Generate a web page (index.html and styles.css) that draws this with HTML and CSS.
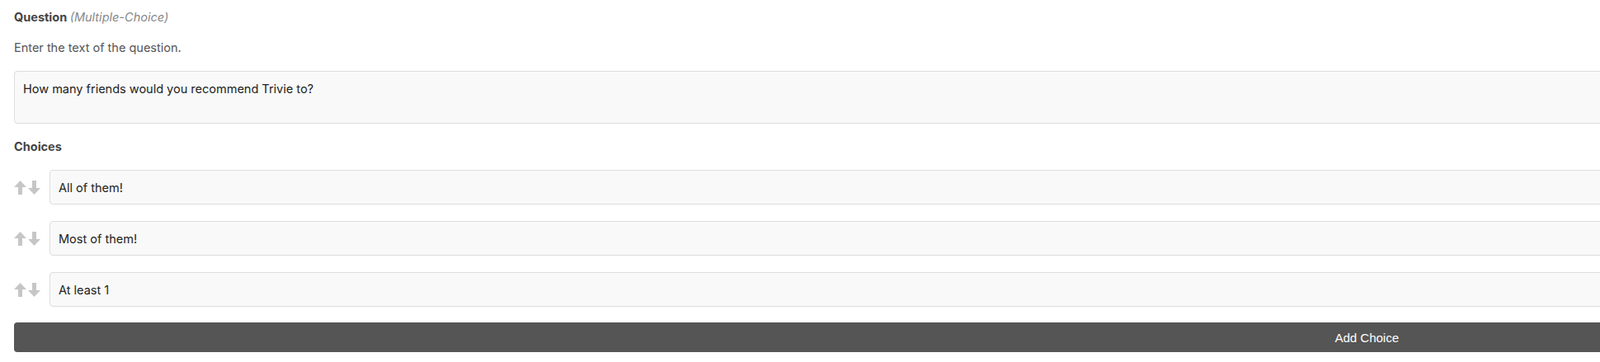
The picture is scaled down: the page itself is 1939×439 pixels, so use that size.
FILE: index.html
```html
<!DOCTYPE html>
<html lang="en">
<head>
  <meta charset="UTF-8" />
  <title>Question Editor</title>
  <link rel="stylesheet" href="styles.css">
</head>
<body>

  <div class="editor">
    <!-- Pregunta -->
    <div class="field-label">Question <em>(Multiple-Choice)</em></div>
    <p class="hint">Enter the text of the question.</p>
    <textarea class="question-text" rows="2">How many friends would you recommend Trivie to?</textarea>

    <!-- Opciones -->
    <div class="field-label choices-label">Choices</div>
    <div class="choices">
      <div class="choice-row">
        <span class="sort">
          <svg viewBox="0 0 15 17"><path d="M7.5 0 15 8H10V17H5V8H0Z"/></svg>
          <svg viewBox="0 0 15 17"><path d="M7.5 17 15 9H10V0H5V9H0Z"/></svg>
        </span>
        <input type="text" class="choice-input" value="All of them!" />
      </div>
      <div class="choice-row">
        <span class="sort">
          <svg viewBox="0 0 15 17"><path d="M7.5 0 15 8H10V17H5V8H0Z"/></svg>
          <svg viewBox="0 0 15 17"><path d="M7.5 17 15 9H10V0H5V9H0Z"/></svg>
        </span>
        <input type="text" class="choice-input" value="Most of them!" />
      </div>
      <div class="choice-row">
        <span class="sort">
          <svg viewBox="0 0 15 17"><path d="M7.5 0 15 8H10V17H5V8H0Z"/></svg>
          <svg viewBox="0 0 15 17"><path d="M7.5 17 15 9H10V0H5V9H0Z"/></svg>
        </span>
        <input type="text" class="choice-input" value="At least 1" />
      </div>
    </div>

    <button type="button" class="add-choice">Add Choice</button>
  </div>

</body>
</html>
```

FILE: styles.css
```css
html, body {
  overflow: hidden;
}
body {
  font-family: 'Inter', 'Liberation Sans', sans-serif;
  background-color: #fff;
  color: #444;
  margin: 0;
  padding: 0;
}
.editor {
  width: 3279px;
  padding: 12px 17px 0;
}
.field-label {
  font-size: 14.5px;
  font-weight: 700;
  line-height: 18px;
  color: #444;
}
.field-label em {
  font-weight: 400;
  color: #888;
}
.hint {
  font-size: 14.5px;
  line-height: 18px;
  color: #555;
  margin: 19px 0;
}
.question-text {
  display: block;
  box-sizing: border-box;
  width: 100%;
  height: 64px;
  padding: 12px 10px 0;
  font-family: 'Inter', 'Liberation Sans', sans-serif;
  font-size: 14.5px;
  line-height: 18px;
  color: #222;
  background-color: #f9f9f9;
  border: 1px solid #ddd;
  border-radius: 4px;
  resize: none;
  outline: none;
}
.choices-label {
  margin-top: 19px;
}
.choices {
  display: flex;
  flex-direction: column;
  gap: 20px;
  margin-top: 19px;
}
.choice-row {
  display: flex;
  align-items: center;
  gap: 10px;
}
.sort {
  display: flex;
  gap: 2px;
  width: 33px;
}
.sort svg {
  width: 15px;
  height: 17px;
  fill: #c6c6c6;
}
.choice-input {
  flex: 1;
  box-sizing: border-box;
  height: 42px;
  padding: 0 10px;
  font-family: 'Inter', 'Liberation Sans', sans-serif;
  font-size: 14.5px;
  color: #222;
  background-color: #f9f9f9;
  border: 1px solid #ddd;
  border-radius: 4px;
  outline: none;
}
.add-choice {
  display: block;
  width: 100%;
  height: 36px;
  margin-top: 19px;
  font-family: 'Liberation Sans', sans-serif;
  font-size: 15px;
  color: #fff;
  background-color: #555;
  border: none;
  border-radius: 4px;
  cursor: pointer;
}
```
